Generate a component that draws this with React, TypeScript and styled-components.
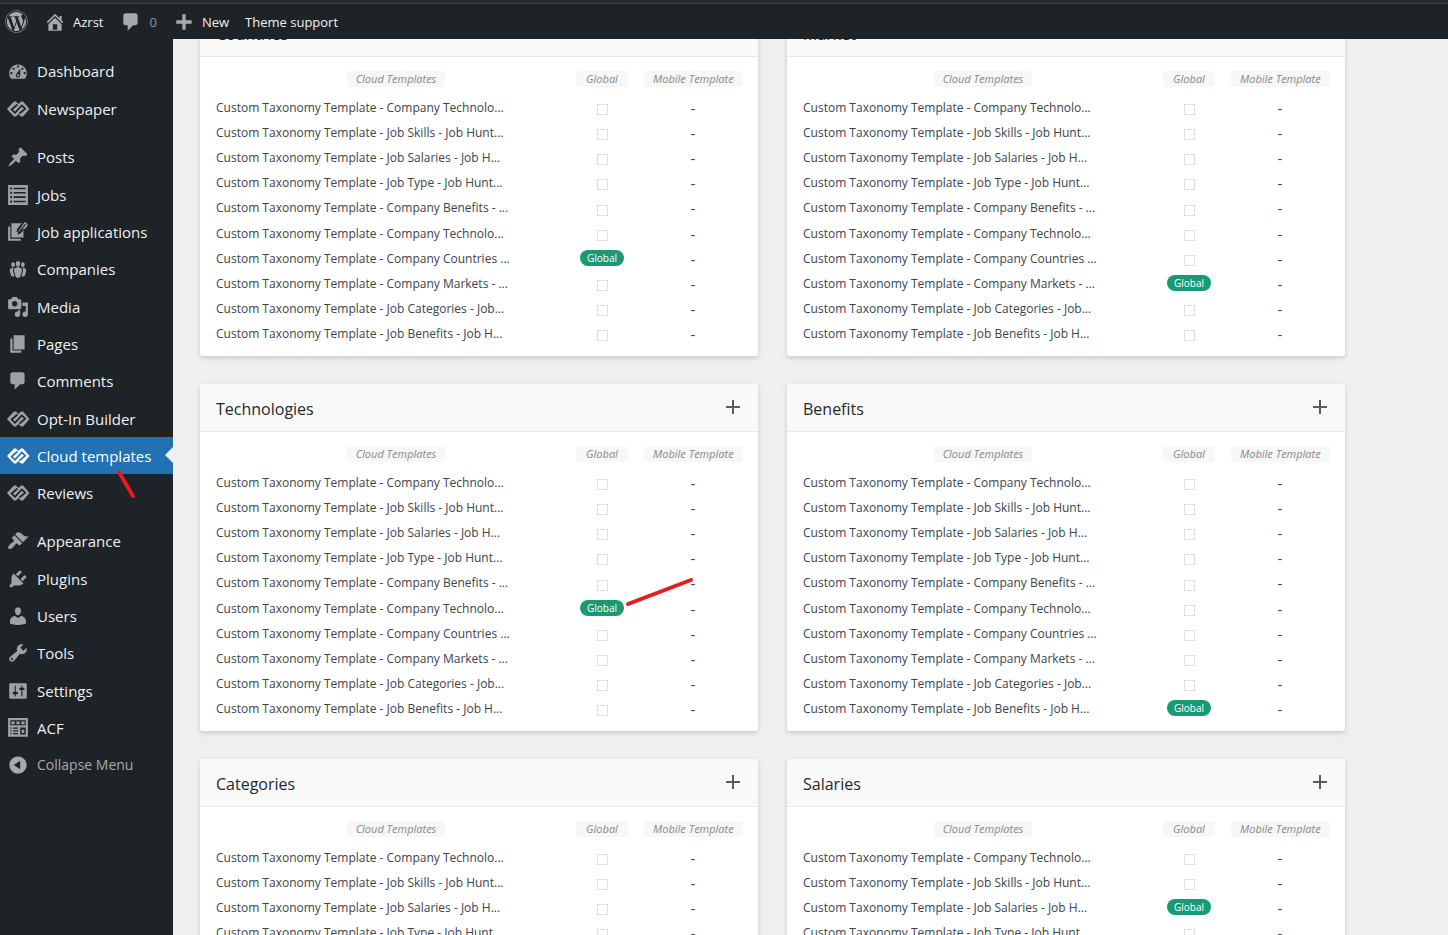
import React from "react";
import styled, { createGlobalStyle, css } from "styled-components";
import { FaWordpress } from "react-icons/fa";

const GlobalStyle = createGlobalStyle`
  *, *::before, *::after { box-sizing: border-box; }
  html { overflow: hidden; }
  body {
    margin: 0;
    height: 100vh;
    overflow: hidden;
    background: #efefef;
    color: #3c434a;
    font-family: "Open Sans", "Segoe UI", "Noto Sans", sans-serif;
    font-size: 12px;
  }
  a { color: inherit; text-decoration: none; }
  ul { margin: 0; padding: 0; list-style: none; }
`;

/* ---------- icons ---------- */

type IconName =
  | "home" | "comment" | "plus" | "dashboard" | "posts" | "jobs" | "applications"
  | "groups" | "media" | "pages" | "appearance" | "plugins" | "users" | "tools"
  | "settings" | "acf" | "collapse" | "brand";

const paths: Record<Exclude<IconName, "brand">, string> = {
  home: "M16 8.5l1.53 1.53-1.06 1.06L10 4.6l-6.47 6.49-1.06-1.06L10 2.5l4 4v-2h2v4zm-6-2.46l6 5.99V18H4v-5.97zM12 17v-5H8v5h4z",
  comment: "M5 2h9c1.1 0 2 .9 2 2v7c0 1.1-.9 2-2 2h-2l-5 5v-5H5c-1.1 0-2-.9-2-2V4c0-1.1.9-2 2-2z",
  plus: "M17 8.500v3h-5.500V17h-3v-5.500H3v-3h5.500V3h3v5.500z",
  dashboard: "M3.76 17h12.48c1.1-1.37 1.76-3.11 1.76-5 0-4.42-3.58-8-8-8s-8 3.58-8 8c0 1.89.66 3.63 1.76 5zM10 5c.55 0 1 .45 1 1s-.45 1-1 1-1-.45-1-1 .45-1 1-1zM6 7c.55 0 1 .45 1 1s-.45 1-1 1-1-.45-1-1 .45-1 1-1zm8 0c.55 0 1 .45 1 1s-.45 1-1 1-1-.45-1-1 .45-1 1-1zm-5.37 5.55L12 8v6c0 1.1-.9 2-2 2s-2-.9-2-2c0-.57.24-1.08.63-1.45zM4 11c.55 0 1 .45 1 1s-.45 1-1 1-1-.45-1-1 .45-1 1-1zm12 0c.55 0 1 .45 1 1s-.45 1-1 1-1-.45-1-1 .45-1 1-1zm-5 3c0-.55-.45-1-1-1s-1 .45-1 1 .45 1 1 1 1-.45 1-1z",
  posts: "M10.44 3.02l1.82-1.82 6.36 6.35-1.83 1.82c-1.05-.68-2.48-.57-3.41.36l-.75.75c-.92.93-1.04 2.35-.35 3.41l-1.83 1.82-2.41-2.41-2.8 2.79c-.42.42-3.38 2.71-3.8 2.29s1.86-3.39 2.28-3.81l2.79-2.79L4.1 9.36l1.83-1.82c1.05.69 2.48.57 3.4-.36l.75-.75c.93-.92 1.05-2.35.36-3.41z",
  jobs: "M1 1h18v18H1zM3 3v2h1.500V3zM6 3.300v1.500h11V3.300zM3 7v2h1.500V7zM6 7.200v1.500h11V7.200zM3 11v2h1.500v-2zM6 11.200v1.500h11v-1.500zM3 15v2h1.500v-2zM6 15.200v1.500h11v-1.500z",
  applications: "M4 2h9.500L9.600 6.500 8.500 10l3.500-1 3-3.500V15H4zM3 5v11.200h9.500V18H1V5zM16 1l2.800 1.800-.4 2L12 11.500l-2.600.8.7-2.600zM16.600 2.600l-5.200 6 .7.6 5.200-5.700z",
  groups: "M8.03 4.46c-.29 1.28.55 3.46 1.97 3.46 1.41 0 2.25-2.18 1.96-3.46-.22-.98-1.08-1.63-1.96-1.63-.89 0-1.74.65-1.97 1.63zm-4.13.9c-.25 1.08.47 2.93 1.67 2.93s1.92-1.85 1.67-2.93c-.19-.83-.92-1.39-1.67-1.39s-1.48.56-1.67 1.39zm8.86 0c-.25 1.08.47 2.93 1.66 2.93 1.2 0 1.92-1.85 1.67-2.93-.19-.83-.92-1.39-1.67-1.39-.74 0-1.47.56-1.66 1.39zm-.59 11.43l1.25-4.3C14.2 10 12.71 8.47 10 8.47c-2.72 0-4.21 1.53-3.44 4.02l1.26 4.3C8.05 17.51 9 18 10 18c.98 0 1.94-.49 2.17-1.21zm-6.1-7.63c-.49.67-.96 1.83-.42 3.59l1.12 3.79c-.34.2-.77.31-1.2.31-.85 0-1.65-.41-1.85-1.03l-1.07-3.65c-.65-2.11.61-3.4 2.92-3.4.27 0 .54.02.79.06-.1.1-.2.22-.29.33zm8.35-.39c2.31 0 3.58 1.29 2.92 3.4l-1.07 3.65c-.2.62-1 1.03-1.85 1.03-.43 0-.86-.11-1.2-.31l1.11-3.77c.55-1.78.08-2.94-.42-3.61-.08-.11-.18-.23-.28-.33.25-.04.51-.06.79-.06z",
  media: "M13 11V4c0-.55-.45-1-1-1h-1.67L9 1H5L3.67 3H2c-.55 0-1 .45-1 1v7c0 .55.45 1 1 1h10c.55 0 1-.45 1-1zM7 4.500c1.380 0 2.500 1.120 2.500 2.500S8.380 9.500 7 9.500 4.500 8.380 4.500 7 5.620 4.500 7 4.500zM14 6h5v10.500c0 1.380-1.120 2.500-2.500 2.500S14 17.880 14 16.500s1.120-2.500 2.500-2.500c.17 0 .34.02.5.05V9h-3V6zm-4 8.050V13h2v3.500c0 1.380-1.120 2.500-2.500 2.500S7 17.880 7 16.500 8.120 14 9.500 14c.17 0 .34.02.5.05z",
  pages: "M6 15V2h10v13H6zm-1 1h8v2H3V5h2v11z",
  appearance: "M14.48 11.06L7.41 3.99l1.5-1.5c.5-.56 2.3-.47 3.51.32 1.21.8 1.43 1.28 2.91 2.1 1.18.64 2.45 1.26 4.45.85zm-.71.71L6.7 4.7 4.93 6.47c-.39.39-.39 1.02 0 1.41l1.06 1.06c.39.39.39 1.03 0 1.42-.6.6-1.43 1.11-2.21 1.69-.35.26-.7.53-1.01.84C1.43 14.23.4 16.08 1.4 17.07c.99 1 2.84-.03 4.18-1.36.31-.31.58-.66.85-1.02.57-.78 1.08-1.61 1.69-2.21.39-.39 1.02-.39 1.41 0l1.06 1.06c.39.39 1.02.39 1.41 0z",
  plugins: "M13.11 4.36L9.87 7.6 8 5.73l3.24-3.24c.35-.34 1.05-.2 1.56.32.52.51.66 1.21.31 1.55zm-8 1.77l.91-1.12 9.01 9.01-1.19.84c-.71.71-2.63 1.16-3.82 1.16H6.14L4.9 17.26c-.59.59-1.54.59-2.12 0-.59-.58-.59-1.53 0-2.12l1.24-1.24v-3.88c0-1.13.4-3.19 1.09-3.89zm7.26 3.97l3.24-3.24c.34-.35 1.04-.21 1.55.31.52.51.66 1.21.31 1.55l-3.24 3.25z",
  users: "M10 9.25c-2.27 0-2.73-3.44-2.73-3.44C7 4.02 7.82 2 9.97 2c2.16 0 2.98 2.02 2.71 3.81 0 0-.41 3.44-2.68 3.44zm0 2.57L12.72 10c2.39 0 4.52 2.33 4.52 4.53v2.49s-3.65 1.13-7.24 1.13c-3.65 0-7.24-1.13-7.24-1.13v-2.49c0-2.25 1.94-4.48 4.47-4.48z",
  tools: "M16.68 9.77c-1.34 1.34-3.3 1.67-4.95.99l-5.41 6.52c-.99.99-2.59.99-3.58 0s-.99-2.59 0-3.57l6.52-5.42c-.68-1.65-.35-3.61.99-4.95 1.28-1.28 3.12-1.62 4.72-1.06l-2.89 2.89 2.82 2.82 2.86-2.87c.53 1.58.18 3.39-1.08 4.65zM3.81 16.21c.4.39 1.04.39 1.43 0 .4-.4.4-1.04 0-1.43-.39-.4-1.03-.4-1.43 0-.39.39-.39 1.03 0 1.43z",
  settings: "M18 16V4c0-.55-.45-1-1-1H3c-.55 0-1 .45-1 1v12c0 .55.45 1 1 1h14c.55 0 1-.45 1-1zM8 11h1c.55 0 1 .45 1 1s-.45 1-1 1H8v1.5c0 .28-.22.5-.5.5s-.5-.22-.5-.5V13H6c-.55 0-1-.45-1-1s.45-1 1-1h1V5.5c0-.28.22-.5.5-.5s.5.22.5.5V11zm5-2h-1c-.55 0-1-.45-1-1s.45-1 1-1h1V5.5c0-.28.22-.5.5-.5s.5.22.5.5V7h1c.55 0 1 .45 1 1s-.45 1-1 1h-1v5.5c0 .28-.22.5-.5.5s-.5-.22-.5-.5V9z",
  acf: "M1 1h18v17H1zM3 3v4.500h14V3zM4 4h3v2.500H4zM8.500 4h3v2.500h-3zM13 4h3v2.500h-3zM3 9.500v1.200h1.200V9.500zM5.500 9.500v1.200H10V9.500zM3 12v1.200h1.200V12zM5.500 12v1.200H10V12zM3 14.500v1.200h1.200v-1.200zM5.500 14.500v1.200H10v-1.200zM12 9.500V16h5V9.500zM13.300 11.500h2.400v3h-2.400z",
  collapse: "M10 2.160c4.330 0 7.840 3.510 7.840 7.840s-3.510 7.840-7.840 7.840S2.160 14.330 2.160 10 5.670 2.160 10 2.160zm2 11.720V6.120L6.180 9.970z",
};

const Glyph = styled.svg`
  display: block;
  flex: none;
  fill: currentColor;
`;

const BrandCut = styled.path<{ $color: string }>`
  fill: none;
  stroke: ${(p) => p.$color};
  stroke-width: 1.7;
`;

function Icon({ name, size = 22, back = "#1d2327" }: { name: IconName; size?: number; back?: string }) {
  if (name === "brand") {
    return (
      <Glyph width={24} height={18} viewBox="0 0 24 18" aria-hidden="true">
        <path d="M1 9L8 1.500h2L12.500 4 15 1.500h2L23.500 9 17 16.500h-2L12.500 14 10 16.500H8z" />
        <BrandCut $color={back} d="M11.400 4.500L5.600 9.500 9 12.800 15.800 5.400 19.200 8.700 13.400 13.600" />
      </Glyph>
    );
  }
  return (
    <Glyph width={size} height={size} viewBox="0 0 20 20" aria-hidden="true">
      <path fillRule="evenodd" d={paths[name]} />
    </Glyph>
  );
}

/* ---------- top bar ---------- */

const TopBar = styled.header`
  position: relative;
  z-index: 2;
  display: flex;
  align-items: center;
  height: 39px;
  padding: 4px 0 0 5px;
  background: linear-gradient(#2b2a33 0 3px, #43404a 3px 4px, #1d2327 4px);
  color: #f0f0f1;
  font-size: 13px;
`;

const BarLink = styled.a<{ $space?: number }>`
  display: flex;
  align-items: center;
  gap: 7px;
  margin-right: ${(p) => p.$space ?? 16}px;
  svg { color: #a7aaad; }
`;

const Count = styled.span`
  color: #8f9498;
`;

/* ---------- side menu ---------- */

const Shell = styled.div`
  display: flex;
  align-items: stretch;
  height: calc(100vh - 39px);
`;

const Sidebar = styled.nav`
  flex: none;
  width: 173px;
  padding-top: 13px;
  background: #1d2327;
`;

const MenuGroup = styled.ul`
  margin-bottom: 11px;
`;

const MenuItem = styled.li`
  &:nth-child(3n + 1) { margin-bottom: 1px; }
`;

const entry = css`
  position: relative;
  display: grid;
  grid-template-columns: 36px 1fr;
  align-items: center;
  gap: 1px;
  width: 100%;
  height: 37px;
  padding: 0;
  border: 0;
  font: inherit;
  font-size: 15px;
  text-align: left;
  white-space: nowrap;
  svg { justify-self: center; }
`;

const MenuLink = styled.a<{ $active?: boolean }>`
  ${entry}
  background: ${(p) => (p.$active ? "#2271b1" : "transparent")};
  color: ${(p) => (p.$active ? "#fff" : "#f0f0f1")};
  svg { color: ${(p) => (p.$active ? "#fff" : "#9ca2a7")}; }
  ${(p) => p.$active && css`
    &::after {
      content: "";
      position: absolute;
      right: 0;
      top: 10px;
      border: 8px solid transparent;
      border-left-width: 0;
      border-right-color: #efefef;
    }
  `}
`;

const CollapseButton = styled.button`
  ${entry}
  background: transparent;
  color: #a7aaad;
  font-size: 14px;
`;

/* ---------- cards ---------- */

const Content = styled.main`
  flex: 1;
  min-width: 0;
  margin-top: -30px;
  padding: 0 27px;
`;

const CardGrid = styled.div`
  display: grid;
  grid-template-columns: 1fr 1fr;
  gap: 28px 29px;
  max-width: 1145px;
`;

const Card = styled.section`
  padding-bottom: 10px;
  border-radius: 3px;
  background: #fff;
  box-shadow: 0 2px 5px rgba(0, 0, 0, 0.16);
`;

const CardHeader = styled.header`
  display: flex;
  align-items: center;
  justify-content: space-between;
  height: 48px;
  padding: 0 16px;
  border-bottom: 1px solid #e9e9e9;
  border-radius: 3px 3px 0 0;
  background: #f9f9f9;
`;

const CardTitle = styled.h2`
  margin: 0;
  padding-top: 2px;
  color: #23282d;
  font-size: 16px;
  font-weight: 400;
`;

const AddButton = styled.button`
  display: flex;
  padding: 0 1px 2px;
  border: 0;
  background: transparent;
  color: #555d66;
`;

const Templates = styled.table`
  width: calc(100% - 32px);
  margin: 0 16px;
  border-collapse: collapse;
  table-layout: fixed;
`;

const HeadCell = styled.th<{ $width?: number }>`
  width: ${(p) => (p.$width ? `${p.$width}px` : "auto")};
  height: 38px;
  padding: 5px 0 0;
  font-weight: 400;
  line-height: 16px;
  text-align: center;
  &:last-child { padding-left: 16px; }
`;

const Pill = styled.span`
  display: block;
  width: max-content;
  margin: 0 auto;
  padding: 0 10px;
  border-radius: 3px;
  background: #f7f7f7;
  color: #888;
  font-size: 11px;
  font-style: italic;
`;

const WidePill = styled(Pill)`
  padding: 0 9px;
`;

const Row = styled.tr`
  height: 25px;
  &:nth-child(5) { height: 26px; }
`;

const Cell = styled.td<{ $center?: boolean }>`
  padding: 0;
  line-height: 20px;
  text-align: ${(p) => (p.$center ? "center" : "left")};
  white-space: nowrap;
  &:last-child {
    padding-left: 16px;
    font-size: 15px;
  }
`;

const Check = styled.input`
  appearance: none;
  display: block;
  width: 11px;
  height: 11px;
  margin: 4px auto 0;
  border: 1px solid #dfdfdf;
  background: #fff;
`;

const Badge = styled.span`
  display: block;
  width: 44px;
  margin: 0 auto 2px;
  border-radius: 8px;
  background: #1a9a74;
  color: #fff;
  font-size: 10px;
  line-height: 16px;
`;

/* ---------- pen marks ---------- */

const PenMark = styled.svg`
  position: absolute;
  z-index: 3;
  overflow: visible;
  pointer-events: none;
  stroke: #e81b1f;
  stroke-width: 4;
  stroke-linecap: round;
`;

const MenuMark = styled(PenMark)`
  left: 119px;
  top: 33px;
`;

const BadgeAnchor = styled.div`
  position: relative;
`;

const BadgeMark = styled(PenMark)`
  left: 100%;
  margin-left: 5px;
  top: -20px;
`;

/* ---------- data ---------- */

const names = [
  "Company Technolo...",
  "Job Skills - Job Hunt...",
  "Job Salaries - Job H...",
  "Job Type - Job Hunt...",
  "Company Benefits - ...",
  "Company Technolo...",
  "Company Countries ...",
  "Company Markets - ...",
  "Job Categories - Job...",
  "Job Benefits - Job H...",
].map((n) => `Custom Taxonomy Template - ${n}`);

const cards: { title: string; active: number; marked?: boolean }[] = [
  { title: "Countries", active: 6 },
  { title: "Market", active: 7 },
  { title: "Technologies", active: 5, marked: true },
  { title: "Benefits", active: 9 },
  { title: "Categories", active: 8 },
  { title: "Salaries", active: 2 },
];

type Entry = { label: string; icon: IconName; active?: boolean };

const menu: Entry[][] = [
  [
    { label: "Dashboard", icon: "dashboard" },
    { label: "Newspaper", icon: "brand" },
  ],
  [
    { label: "Posts", icon: "posts" },
    { label: "Jobs", icon: "jobs" },
    { label: "Job applications", icon: "applications" },
    { label: "Companies", icon: "groups" },
    { label: "Media", icon: "media" },
    { label: "Pages", icon: "pages" },
    { label: "Comments", icon: "comment" },
    { label: "Opt-In Builder", icon: "brand" },
    { label: "Cloud templates", icon: "brand", active: true },
    { label: "Reviews", icon: "brand" },
  ],
  [
    { label: "Appearance", icon: "appearance" },
    { label: "Plugins", icon: "plugins" },
    { label: "Users", icon: "users" },
    { label: "Tools", icon: "tools" },
    { label: "Settings", icon: "settings" },
    { label: "ACF", icon: "acf" },
  ],
];

function TemplateCard({ title, active, marked }: { title: string; active: number; marked?: boolean }) {
  return (
    <Card>
      <CardHeader>
        <CardTitle>{title}</CardTitle>
        <AddButton aria-label={`Add ${title} template`}>
          <svg width="16" height="16" viewBox="0 0 16 16" aria-hidden="true">
            <path d="M8 1v14M1 8h14" stroke="currentColor" strokeWidth="2" />
          </svg>
        </AddButton>
      </CardHeader>
      <Templates>
        <thead>
          <tr>
            <HeadCell scope="col"><WidePill>Cloud Templates</WidePill></HeadCell>
            <HeadCell scope="col" $width={52}><Pill>Global</Pill></HeadCell>
            <HeadCell scope="col" $width={114}><WidePill>Mobile Template</WidePill></HeadCell>
          </tr>
        </thead>
        <tbody>
          {names.map((name, i) => (
            <Row key={i}>
              <Cell>{name}</Cell>
              <Cell $center>
                {i === active ? (
                  <BadgeAnchor>
                    <Badge>Global</Badge>
                    {marked && (
                      <BadgeMark width="64" height="26" viewBox="0 0 64 26" aria-hidden="true">
                        <path d="M-5 24L58 0" />
                      </BadgeMark>
                    )}
                  </BadgeAnchor>
                ) : (
                  <Check type="checkbox" aria-label={`Make ${name} global`} />
                )}
              </Cell>
              <Cell $center>-</Cell>
            </Row>
          ))}
        </tbody>
      </Templates>
    </Card>
  );
}

export default function App() {
  return (
    <>
      <GlobalStyle />
      <TopBar>
        <BarLink href="#" aria-label="About WordPress">
          <FaWordpress size={23} />
        </BarLink>
        <BarLink href="#" $space={17}><Icon name="home" />Azrst</BarLink>
        <BarLink href="#"><Icon name="comment" />
          <Count>0</Count>
        </BarLink>
        <BarLink href="#"><Icon name="plus" />New</BarLink>
        <BarLink href="#">Theme support</BarLink>
      </TopBar>
      <Shell>
        <Sidebar aria-label="Main menu">
          {menu.map((group, g) => (
            <MenuGroup key={g}>
              {group.map((item) => (
                <MenuItem key={item.label}>
                  <MenuLink href="#" $active={item.active} aria-current={item.active ? "page" : undefined}>
                    <Icon name={item.icon} back={item.active ? "#2271b1" : undefined} />
                    {item.label}
                    {item.active && (
                      <MenuMark width="16" height="26" viewBox="0 0 16 26" aria-hidden="true">
                        <path d="M0 2L14 26" />
                      </MenuMark>
                    )}
                  </MenuLink>
                </MenuItem>
              ))}
              {g === menu.length - 1 && (
                <MenuItem>
                  <CollapseButton><Icon name="collapse" />Collapse Menu</CollapseButton>
                </MenuItem>
              )}
            </MenuGroup>
          ))}
        </Sidebar>
        <Content>
          <CardGrid>
            {cards.map((card) => <TemplateCard key={card.title} {...card} />)}
          </CardGrid>
        </Content>
      </Shell>
    </>
  );
}
